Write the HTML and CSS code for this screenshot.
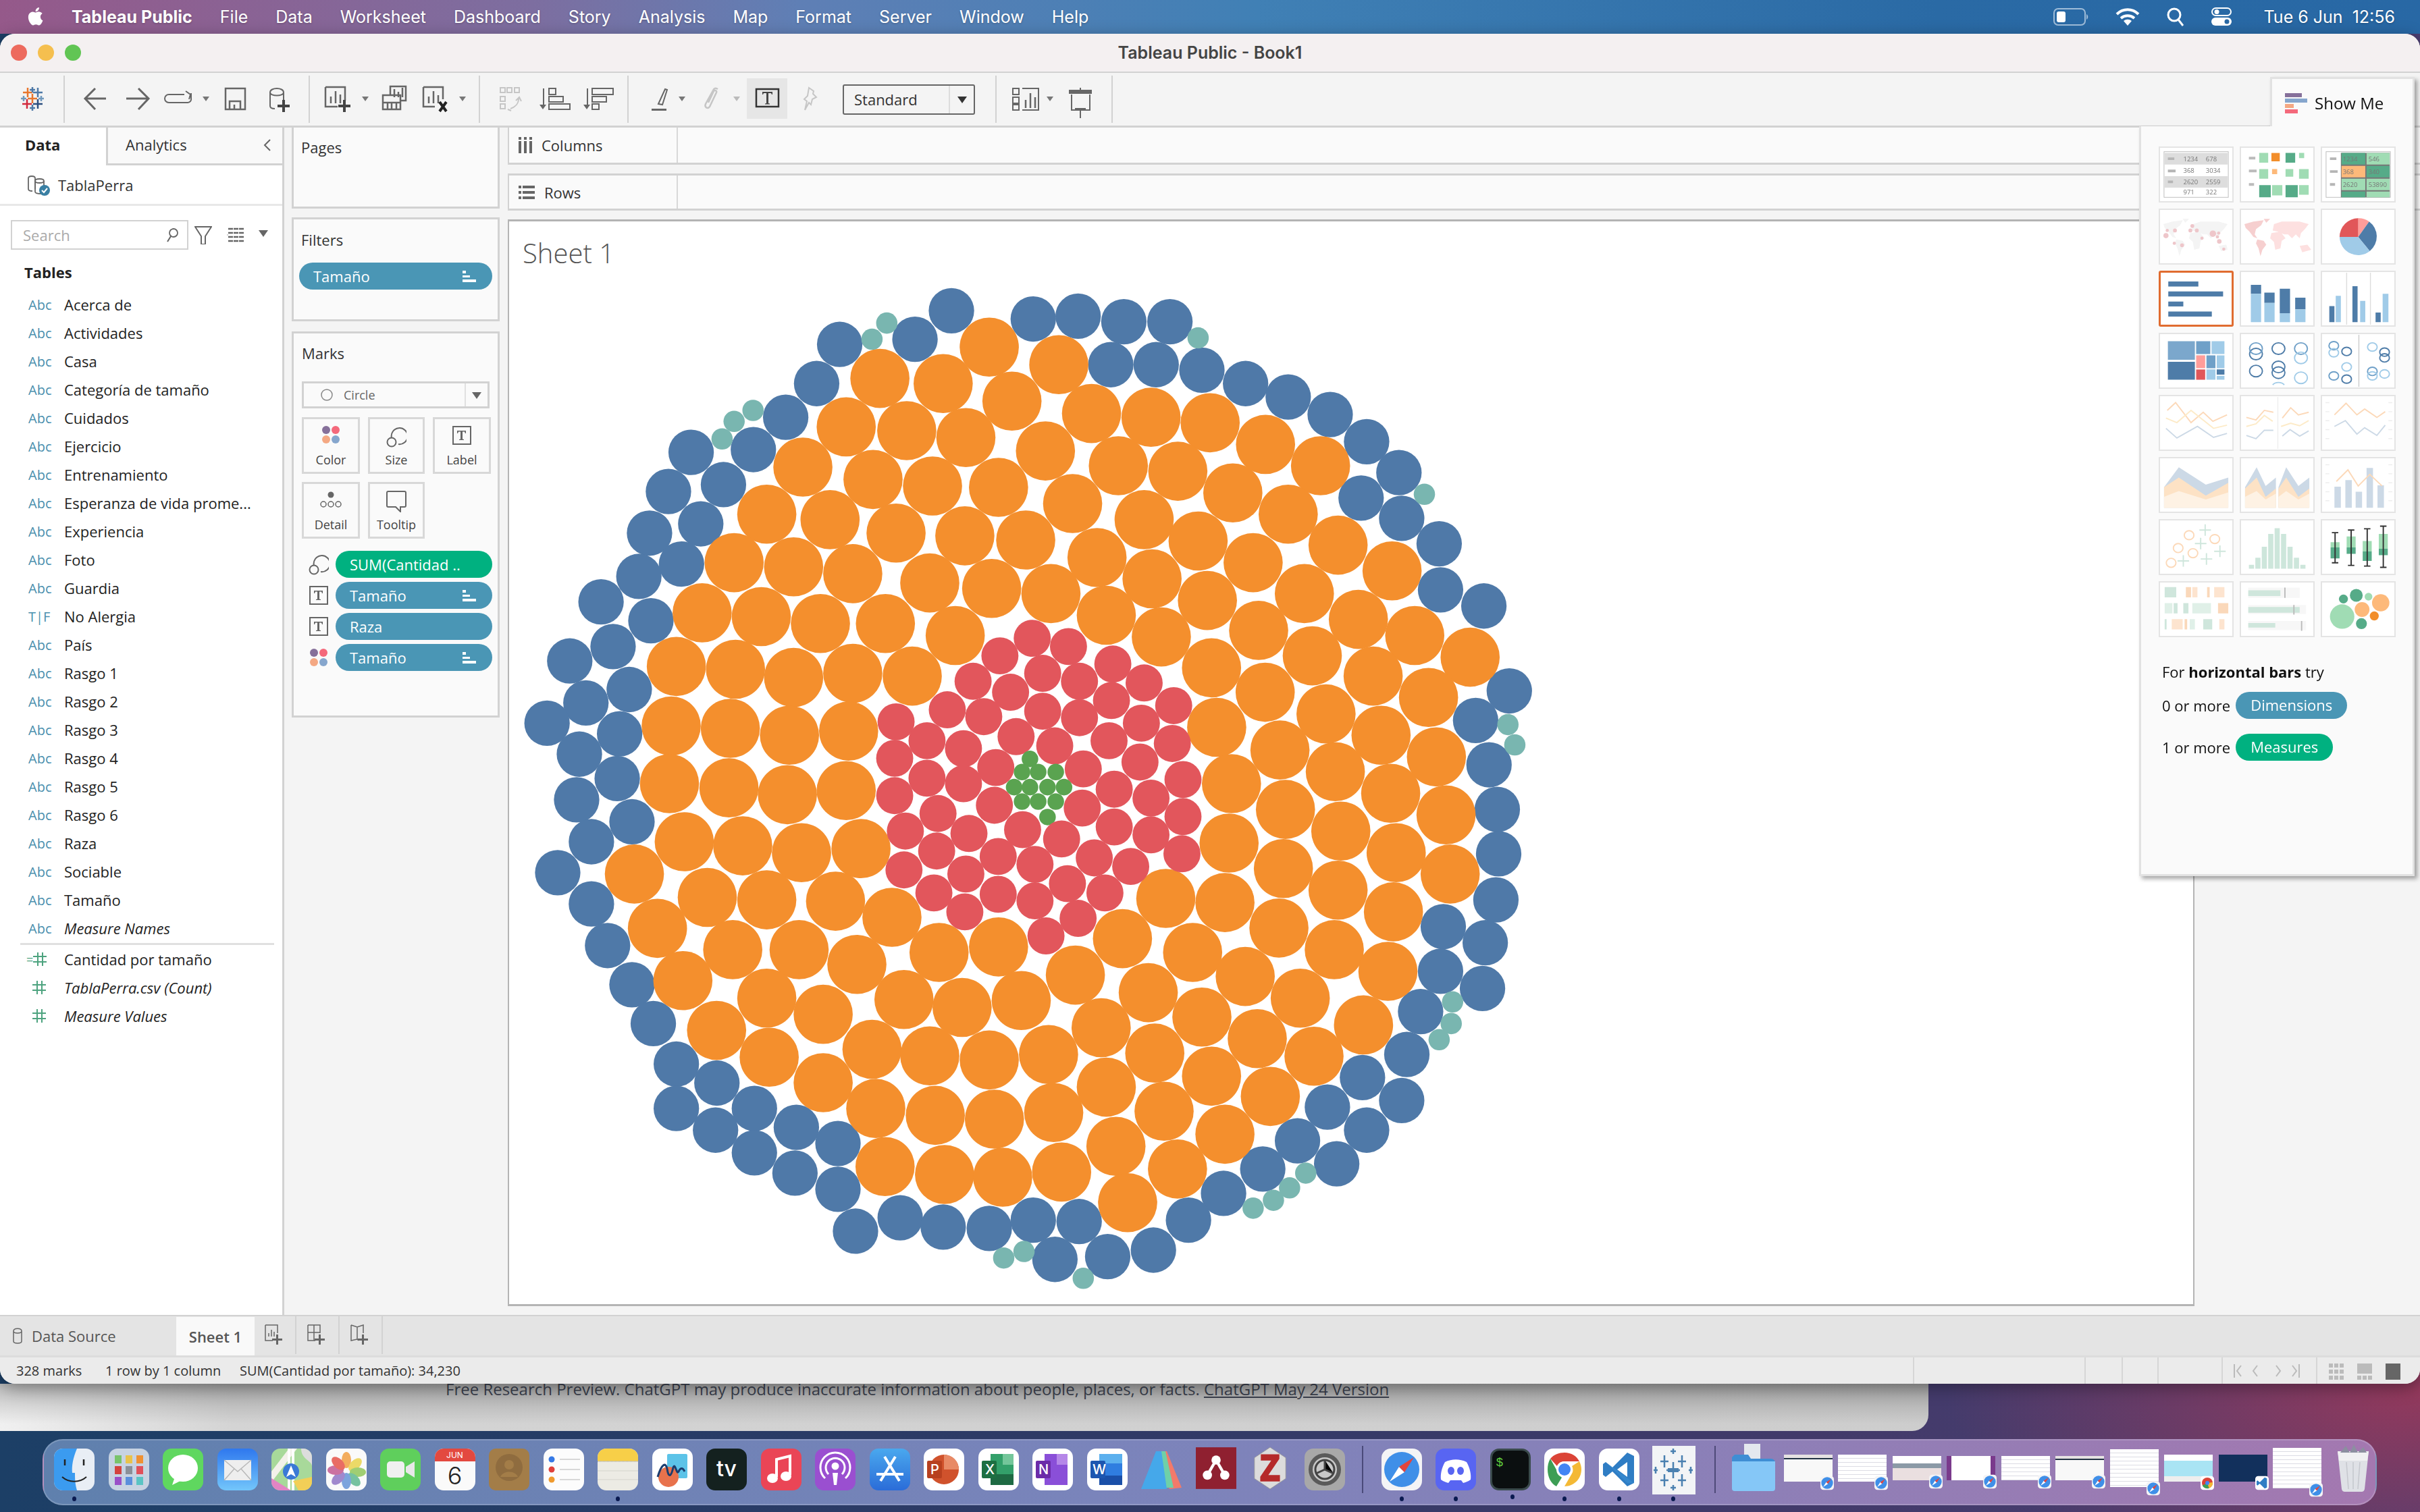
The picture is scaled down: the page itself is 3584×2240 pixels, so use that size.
FILE: index.html
```html
<!doctype html>
<html lang="en">
<head>
    <meta charset="UTF-8">
    <title>Tableau Public - Book1</title>
    <link rel="stylesheet" href="styles.css">
    <script src="chart.js" defer></script>
</head>
<body>
<svg class="defs" width="0" height="0">
    <symbol id="sort" viewBox="0 0 20 17"><path fill="#fff" d="M0 0h5v4H0zM0 7h11v3H0zM0 13h20v4H0z"/></symbol>
    <symbol id="hash" viewBox="0 0 20 20"><path fill="none" stroke="#4da37f" stroke-width="2" d="M7 0v20M14 0v20M0 6h20M0 14h20"/></symbol>
    <symbol id="dots" viewBox="0 0 26 26"><circle cx="6" cy="6" r="6" fill="#86709a"/><circle cx="20" cy="6" r="6" fill="#f4697b"/><circle cx="6" cy="20" r="6" fill="#f4a883"/><circle cx="20" cy="20" r="6" fill="#86a6cd"/></symbol>
    <symbol id="size" viewBox="0 0 30 32"><g fill="none" stroke="#666" stroke-width="2"><path d="M8 18a12 12 0 1 1 10 9"/><circle cx="8" cy="24" r="6.5"/></g></symbol>
    <symbol id="tbox" viewBox="0 0 28 28"><rect x="1" y="1" width="26" height="26" fill="none" stroke="#666" stroke-width="2"/><path fill="#666" d="M8 7h12v4h-1l-1-2.500h-3v11l2 .5v1H10v-1l2-.5v-11H9l-1 2.500H7V7z"/></symbol>
    <symbol id="safari" viewBox="0 0 60 62"><rect width="60" height="62" rx="14" fill="#f4f4f6"/><circle cx="30" cy="31" r="26" fill="#3f8fe8"/><path fill="#fff" d="M12 49 26 27l8 8z"/><path fill="#e5443c" d="M48 13 34 35l-8-8z"/></symbol>
</svg>

<header class="menubar">
    <svg class="apple" viewBox="0 0 24 24"><path fill="#fff" d="M17.050 12.040c-.03-2.870 2.340-4.250 2.450-4.320-1.340-1.950-3.410-2.220-4.150-2.250-1.760-.18-3.440 1.040-4.340 1.040-.89 0-2.270-1.010-3.740-.99-1.920.03-3.700 1.120-4.690 2.840-2 3.470-.51 8.610 1.440 11.420.95 1.380 2.090 2.920 3.580 2.870 1.440-.06 1.980-.93 3.720-.93 1.730 0 2.220.93 3.740.9 1.550-.03 2.530-1.400 3.470-2.790 1.090-1.600 1.540-3.150 1.570-3.230-.03-.02-3.020-1.160-3.050-4.560zM14.180 3.620c.79-.96 1.330-2.290 1.180-3.620-1.140.05-2.530.76-3.350 1.720-.73.85-1.370 2.200-1.200 3.500 1.270.1 2.570-.65 3.370-1.600z"/></svg>
    <nav class="menu">
        <span class="app">Tableau Public</span>
        <span>File</span><span>Data</span><span>Worksheet</span><span>Dashboard</span><span>Story</span><span>Analysis</span><span>Map</span><span>Format</span><span>Server</span><span>Window</span><span>Help</span>
    </nav>
    <div class="status-icons">
        <svg width="52" height="26" viewBox="0 0 52 26"><rect x="1" y="1" width="46" height="24" rx="6" fill="none" stroke="#9fbcd8" stroke-width="2"/><rect x="5" y="5" width="13" height="16" rx="3" fill="#fff"/><path d="M49 9c3 2 3 6 0 8z" fill="#9fbcd8"/></svg>
        <svg width="36" height="26" viewBox="0 0 36 26"><g fill="none" stroke="#fff" stroke-width="4"><path d="M2 9c9-9 23-9 32 0"/><path d="M8 15c6-5 14-5 20 0"/></g><path fill="#fff" d="M12 19c4-3 8-3 12 0l-6 7z"/></svg>
        <svg width="26" height="28" viewBox="0 0 26 28"><circle cx="11" cy="11" r="9" fill="none" stroke="#fff" stroke-width="3"/><path d="m17 18 7 9" stroke="#fff" stroke-width="3"/></svg>
        <svg width="30" height="28" viewBox="0 0 30 28"><rect x="1" y="1" width="28" height="11" rx="5.500" fill="none" stroke="#fff" stroke-width="2"/><circle cx="8" cy="6.500" r="3.500" fill="#fff"/><rect y="15" width="30" height="12" rx="6" fill="#fff"/><circle cx="23" cy="21" r="3.500" fill="#2868a5"/></svg>
        <span class="clock">Tue 6 Jun&nbsp;&nbsp;12:56</span>
    </div>
</header>

<main class="window">
    <div class="titlebar">
        <div class="lights"><i class="red"></i><i class="yellow"></i><i class="green"></i></div>
        <div class="title">Tableau Public - Book1</div>
    </div>

    <div class="toolbar">
        <svg class="tb-left" width="1248" height="78" viewBox="0 108 1248 78">
            <path d="M95 112v70M458 112v70M710 112v70M930 112v70" stroke="#d2d2d2" stroke-width="2"/>
            <g fill="none" stroke-width="2.500">
                <path stroke="#e8762d" d="M41 130v14M34 137h14M48 139v14M41 146h14"/>
                <path stroke="#4e79a7" d="M56 130v14M49 137h14M48 129v8M44 133h8M48 155v9M44 160h8"/>
                <path stroke="#7199bd" d="M35 142v8M31 146h8M61 142v8M57 146h8"/>
                <path stroke="#d1293d" d="M40 147v14M33 154h14"/>
                <path stroke="#2c4f80" d="M56 147v14M49 154h14"/>
            </g>
            <g fill="none" stroke="#666" stroke-width="3">
                <path d="M157 146h-32M141 131l-15 15 15 16"/>
                <path d="M187 146h32M205 131l15 15-15 16"/>
                <path stroke-width="2" d="M273 140h-23a5.500 5.500 0 0 0 0 12h28a5 5 0 0 0 5-6v-8M275 135l7 5-2 7"/>
                <path stroke-width="2.500" d="M334 131h29v31h-29zM340 162v-12h16v12M347 155v7"/>
                <path stroke-width="2" d="M400 137c0-8 20-8 20 0v15M400 137c0 6 20 6 20 0M400 137v20c0 4 4 4 7 4"/>
                <path stroke-width="2.500" d="M482 129h29v20M500 158h-18v-29M490 153v-10M497 153v-18M504 153v-13"/>
                <path stroke-width="2.500" d="M578 140v-12h23v21h-8M567 141h26v21h-26zM567 152h26M574 153v8M580 153v8M587 153v8M584 132v12M590 136v8M596 130v14"/>
                <path stroke-width="2.500" d="M627 129h29v18M644 158h-17v-29M635 153v-10M642 153v-18M649 153v-12"/>
                <path stroke-width="2" d="M805 131v25M813 131h10v9h-10zM813 143h21v8h-21zM813 154h31v8h-31z"/>
                <path stroke-width="2" d="M870 131v25M877 131h31v9h-31zM877 143h21v8h-21zM877 154h10v8h-10z"/>
                <path stroke-width="2" d="M975 154l10-22 3 1-7 22zM967 158"/>
            </g>
            <path fill="#444" d="M418 148h4v7h7v4h-7v7h-4v-7h-7v-4h7zM508 148h4v7h7v4h-7v7h-4v-7h-7v-4h7z"/>
            <path d="m651 151 10 14M661 151l-10 14" stroke="#222" stroke-width="4"/>
            <path fill="#666" d="M799 155h10l-5 7zM864 155h10l-5 7zM965 161h22v3h-22z"/>
            <path fill="#777" d="M300 143h10l-5 7zM536 143h10l-5 7zM680 143h10l-5 7zM1005 143h10l-5 7z"/>
            <path fill="#bbb" d="M1086 143h10l-5 7z"/>
            <g fill="none" stroke="#c6c6c6" stroke-width="2">
                <path d="M741 130h7v7h-7zM751 130h7v7h-7zM762 130h7v7h-7zM741 143h7v7h-7zM741 154h7v7h-7zM768 146c0 8-4 12-12 15M764 149l5-5 3 6M752 162l5 2"/>
                <path stroke-width="2.500" d="M1063 132c-4-3-6 0-7 2l-11 20c-2 5 3 8 6 4l10-21c1-3-3-4-4-2l-8 17"/>
                <path d="M1198 130l7 5-1 4 5 5-6 3-2 8-3-3-6 11 3-13-4-3 5-5z"/>
            </g>
            <rect x="1106" y="116" width="60" height="60" fill="#e6e6e6"/>
            <rect x="1120" y="132" width="33" height="26" fill="none" stroke="#333" stroke-width="2.500"/>
            <path fill="#444" d="M1129 136h15v4h-1l-1-2h-4v15l2 .5v1h-7v-1l2-.5v-15h-4l-1 2h-1z"/>
        </svg>
        <div class="fit-select"><span>Standard</span><b></b></div>
        <svg class="tb-right" width="220" height="78" viewBox="1444 108 220 78">
            <path d="M1475 112v70M1647 112v70" stroke="#d2d2d2" stroke-width="2"/>
            <g fill="none" stroke="#666" stroke-width="2">
                <path d="M1500 131h9v9h-9zM1500 144h9v9h-9zM1500 155h9v8h-9zM1514 131h24v32h-24"/>
                <path stroke-width="2.500" d="M1519 160v-12M1526 160v-22M1533 160v-16"/>
                <path d="M1587 140v23h27v-23M1600 130v6M1600 163v12M1592 161h16"/>
            </g>
            <path fill="#666" d="M1583 133h34v6h-34z"/>
            <path fill="#777" d="M1550 143h10l-5 7z"/>
        </svg>
    </div>

    <div class="workspace">
        <aside class="data-pane">
            <div class="tabs">
                <div class="tab on">Data</div>
                <div class="tab">Analytics<svg class="chev" width="12" height="18" viewBox="0 0 12 18"><path d="M10 1 2 9l8 8" fill="none" stroke="#666" stroke-width="2"/></svg></div>
            </div>
            <div class="source">
                <svg width="34" height="32" viewBox="0 0 34 32"><g fill="none" stroke="#666" stroke-width="1.800"><path d="M2 6c0-4 10-4 10 0v20c0 3 5 3 9 3"/><path d="M2 6v16c0 3 4 3 6 3"/><path d="M12 10c0-4 13-4 13 0s-13 4-13 0v12"/><path d="M25 10v8"/></g><circle cx="26" cy="24" r="8" fill="#397fa3"/><path d="m22 24 3 3 5-6" fill="none" stroke="#fff" stroke-width="2"/></svg>
                <span>TablaPerra</span>
            </div>
            <div class="search-row">
                <div class="search"><span>Search</span><svg width="20" height="22" viewBox="0 0 20 22"><circle cx="12" cy="8" r="6" fill="none" stroke="#666" stroke-width="1.800"/><path d="M8 13 3 21" stroke="#666" stroke-width="2"/></svg></div>
                <svg class="filter" width="26" height="28" viewBox="0 0 26 28"><path d="M1 2h24l-9 14v12h-6V16z" fill="none" stroke="#666" stroke-width="2"/></svg>
                <svg class="list" width="24" height="24" viewBox="0 0 24 24"><path stroke="#666" stroke-width="2.500" stroke-dasharray="7 1" d="M0 3h24M0 9h24M0 15h24M0 21h24"/></svg>
                <b class="caret"></b>
            </div>
            <div class="tables-head">Tables</div>
            <ul class="fields">
                <li><i>Abc</i>Acerca de</li>
                <li><i>Abc</i>Actividades</li>
                <li><i>Abc</i>Casa</li>
                <li><i>Abc</i>Categoría de tamaño</li>
                <li><i>Abc</i>Cuidados</li>
                <li><i>Abc</i>Ejercicio</li>
                <li><i>Abc</i>Entrenamiento</li>
                <li><i>Abc</i>Esperanza de vida prome...</li>
                <li><i>Abc</i>Experiencia</li>
                <li><i>Abc</i>Foto</li>
                <li><i>Abc</i>Guardia</li>
                <li><i>T|F</i>No Alergia</li>
                <li><i>Abc</i>País</li>
                <li><i>Abc</i>Rasgo 1</li>
                <li><i>Abc</i>Rasgo 2</li>
                <li><i>Abc</i>Rasgo 3</li>
                <li><i>Abc</i>Rasgo 4</li>
                <li><i>Abc</i>Rasgo 5</li>
                <li><i>Abc</i>Rasgo 6</li>
                <li><i>Abc</i>Raza</li>
                <li><i>Abc</i>Sociable</li>
                <li><i>Abc</i>Tamaño</li>
                <li class="calc"><i>Abc</i>Measure Names</li>
            </ul>
            <ul class="fields measures">
                <li><i class="eq">=<svg width="20" height="20"><use href="#hash"/></svg></i>Cantidad por tamaño</li>
                <li class="calc"><i class="eq"><svg width="20" height="20"><use href="#hash"/></svg></i>TablaPerra.csv (Count)</li>
                <li class="calc"><i class="eq"><svg width="20" height="20"><use href="#hash"/></svg></i>Measure Values</li>
            </ul>
        </aside>

        <section class="cards">
            <div class="card pages"><h3>Pages</h3></div>
            <div class="card filters">
                <h3>Filters</h3>
                <div class="pill blue wide">Tamaño<svg width="20" height="17"><use href="#sort"/></svg></div>
            </div>
            <div class="card marks">
                <h3>Marks</h3>
                <div class="mark-type"><svg width="18" height="18" viewBox="0 0 18 18"><circle cx="9" cy="9" r="8" fill="none" stroke="#888" stroke-width="1.500"/></svg><span>Circle</span><b></b></div>
                <div class="mark-btns">
                    <div class="mark-btn"><svg width="26" height="26"><use href="#dots"/></svg>Color</div>
                    <div class="mark-btn"><svg width="30" height="32"><use href="#size"/></svg>Size</div>
                    <div class="mark-btn"><svg width="28" height="28"><use href="#tbox"/></svg>Label</div>
                    <div class="mark-btn"><svg width="32" height="28" viewBox="0 0 32 28"><circle cx="16" cy="6" r="4.500" fill="#666"/><g fill="none" stroke="#666" stroke-width="1.500"><circle cx="5" cy="20" r="4"/><circle cx="16" cy="20" r="4"/><circle cx="27" cy="20" r="4"/></g></svg>Detail</div>
                    <div class="mark-btn"><svg width="30" height="32" viewBox="0 0 30 32"><path d="M3 1h24a2 2 0 0 1 2 2v19a2 2 0 0 1-2 2h-6v7l-7-7H3a2 2 0 0 1-2-2V3a2 2 0 0 1 2-2z" fill="none" stroke="#666" stroke-width="2"/></svg>Tooltip</div>
                </div>
                <div class="mark-row"><svg width="30" height="32"><use href="#size"/></svg><div class="pill green">SUM(Cantidad ..</div></div>
                <div class="mark-row"><svg width="28" height="28"><use href="#tbox"/></svg><div class="pill blue">Tamaño<svg width="20" height="17"><use href="#sort"/></svg></div></div>
                <div class="mark-row"><svg width="28" height="28"><use href="#tbox"/></svg><div class="pill blue">Raza</div></div>
                <div class="mark-row"><svg width="26" height="26"><use href="#dots"/></svg><div class="pill blue">Tamaño<svg width="20" height="17"><use href="#sort"/></svg></div></div>
            </div>
        </section>

        <section class="stage">
            <div class="shelf"><div class="shelf-name"><svg width="20" height="24" viewBox="0 0 20 24"><path stroke="#666" stroke-width="4" stroke-dasharray="4 2 18" d="M2 0v24M10 0v24M18 0v24"/></svg>Columns</div></div>
            <div class="shelf"><div class="shelf-name"><svg width="24" height="20" viewBox="0 0 24 20"><path stroke="#666" stroke-width="4" stroke-dasharray="4 2 18" d="M0 2h24M0 10h24M0 18h24"/></svg>Rows</div></div>
            <div class="sheet">
                <h2>Sheet 1</h2>
                <svg id="bubbles" class="bubbles" viewBox="752 322 2498 1613"></svg>
            </div>
        </section>
    </div>

    <div class="sheetbar">
        <div class="ds-tab"><svg width="14" height="24" viewBox="0 0 14 24"><path d="M1 5c0-5 12-5 12 0v15c0 4-12 4-12 0zM1 5c0 4 12 4 12 0" fill="none" stroke="#666" stroke-width="1.500"/></svg>Data Source</div>
        <div class="sheet-tab">Sheet 1</div>
        <div class="add-tab"><svg width="30" height="32" viewBox="0 0 30 32"><path d="M1 1h18v12M12 24H1V1M6 18v-5M10 18V8M14 18v-7" fill="none" stroke="#666" stroke-width="1.500"/><path d="M17 15h3v6h6v3h-6v6h-3v-6h-6v-3h6z" fill="#666"/></svg></div>
        <div class="add-tab"><svg width="30" height="32" viewBox="0 0 30 32"><path d="M1 1h18v12M12 24H1V1M1 12h18M10 1v23" fill="none" stroke="#666" stroke-width="1.500"/><path d="M17 15h3v6h6v3h-6v6h-3v-6h-6v-3h6z" fill="#666"/></svg></div>
        <div class="add-tab"><svg width="30" height="32" viewBox="0 0 30 32"><path d="M1 1l9 3 9-3v12M12 24l-2-2-9 2V1M10 4v18" fill="none" stroke="#666" stroke-width="1.500"/><path d="M17 15h3v6h6v3h-6v6h-3v-6h-6v-3h6z" fill="#666"/></svg></div>
    </div>

    <footer class="statusbar">
        <span class="stat s1">328 marks</span>
        <span class="stat s2">1 row by 1 column</span>
        <span class="stat">SUM(Cantidad por tamaño): 34,230</span>
        <div class="cells"><i class="c1"></i><i class="c2"></i><i class="c3"></i><i class="c4"></i><i class="c5"></i>
            <svg class="nav" width="100" height="24" viewBox="0 0 100 24"><path fill="none" stroke="#bbb" stroke-width="2" d="M2 2v20M12 4 6 12l6 8M36 4l-6 8 6 8M64 4l6 8-6 8M88 4l6 8-6 8M98 2v20"/></svg>
            <i class="c6"></i>
            <svg class="views" width="106" height="24" viewBox="0 0 106 24"><path fill="#bbb" d="M0 0h6v6H0zM8 0h6v6H8zM16 0h6v6h-6zM0 9h6v6H0zM8 9h6v6H8zM16 9h6v6h-6zM0 18h6v6H0zM8 18h6v6H8zM16 18h6v6h-6zM42 0h22v15H42zM42 18h6v6h-6zM50 18h6v6h-6zM58 18h6v6h-6z"/><path fill="#666" d="M84 0h22v24H84z"/></svg>
        </div>
    </footer>

    <aside class="showme">
        <div class="showme-tab">
            <svg width="33" height="30" viewBox="0 0 33 30"><path fill="#86709a" d="M0 0h25v6H0z"/><path fill="#86a6cd" d="M0 8h33v6H0z"/><path fill="#f4a883" d="M0 16h13v6H0z"/><path fill="#f4697b" d="M0 24h19v6H0z"/></svg>
            Show Me
        </div>
        <div class="showme-body">
            <div class="thumbs">
                <svg class="thumb" viewBox="0 0 110 83"><rect x="5" y="6" width="100" height="71" fill="none" stroke="#bbb"/><path fill="#ddd" d="M6 8h98v18H6zM6 44h98v18H6z"/><path fill="#b5b5b5" d="M11 15h10v4H11zM11 34h12v4H11zM11 51h8v4h-8z"/><g class="tnum"><text x="35" y="21">1234</text><text x="70" y="21">678</text><text x="35" y="39">368</text><text x="70" y="39">3034</text><text x="35" y="57">2620</text><text x="70" y="57">2559</text><text x="35" y="73">971</text><text x="70" y="73">322</text></g></svg>
                <svg class="thumb" viewBox="0 0 110 83"><path fill="#bbb" d="M11 14h10v4H11zM11 34h12v4H11zM11 55h8v4h-8z"/><path fill="#a0dcb4" d="M27 8h14v15H27zM89 8h8v8h-8zM27 33h14v15H27zM68 33h12v12H68zM89 33h15v15H89zM47 58h16v16H47zM89 58h15v15H89z"/><path fill="#f28e2b" d="M46 8h13v13H46z"/><path fill="#56ab88" d="M68 8h15v15H68zM27 58h18v19H27zM68 58h19v19H68z"/><path fill="#fdb97a" d="M47 33h8v8h-8z"/></svg>
                <svg class="thumb" viewBox="0 0 110 83"><rect x="5" y="6" width="100" height="71" fill="none" stroke="#bbb"/><path fill="#777" d="M28 8h76v69H28z"/><path fill="#b5b5b5" d="M11 15h10v4H11zM11 35h12v4H11zM11 55h8v4h-8z"/><path fill="#56ab88" d="M29 8h37v18H29zM68 28h36v18H68zM29 68h37v9H29z"/><path fill="#a0dcb4" d="M68 8h36v18H68zM29 48h37v18H29zM68 48h36v18H68zM68 68h36v9H68z"/><path fill="#fdb97a" d="M29 28h37v18H29z"/><g class="tnum"><text x="31" y="21">1234</text><text x="71" y="21">546</text><text x="31" y="41">368</text><text x="71" y="41">340</text><text x="31" y="61">2620</text><text x="71" y="61">53890</text></g></svg>
                <svg class="thumb" viewBox="0 0 110 83"><path fill="#f4f4f4" d="M4 22 18 18 34 16 30 24 22 30 20 38 24 44 18 42 12 34 6 28ZM34 14 44 14 38 20ZM24 46 34 48 38 54 32 62 29 72 26 60 22 52ZM46 36 60 34 68 44 62 48 60 60 52 62 50 50 44 44ZM50 22 62 18 90 18 104 22 98 30 92 36 90 44 84 38 78 44 72 38 66 38 56 34 48 32ZM90 56 102 54 104 62 94 64Z"/><g fill="#eec6ca"><circle cx="49" cy="25" r="3"/><circle cx="10" cy="32" r="2.500"/><circle cx="22" cy="32" r="3"/><circle cx="46" cy="32" r="3"/><circle cx="56" cy="32" r="3"/><circle cx="8" cy="40" r="4"/><circle cx="81" cy="37" r="5"/><circle cx="90" cy="36" r="2.500"/><circle cx="88" cy="42" r="2.500"/><circle cx="91" cy="49" r="3.500"/><circle cx="64" cy="44" r="2.500"/><circle cx="21" cy="52" r="2.500"/><circle cx="33" cy="55" r="3"/><circle cx="98" cy="61" r="2.500"/></g></svg>
                <svg class="thumb" viewBox="0 0 110 83"><path fill="#f6cfcf" d="M4 22 18 18 34 16 30 24 22 30 20 38 24 44 18 42 12 34 6 28ZM34 14 44 14 38 20ZM24 46 34 48 38 54 32 62 29 72 26 60 22 52Z"/><path fill="#fde0e0" d="M46 36 60 34 68 44 62 48 60 60 52 62 50 50 44 44ZM50 22 62 18 90 18 104 22 98 30 92 36 90 44 84 38 78 44 72 38 66 38 56 34 48 32ZM90 56 102 54 108 62 94 66Z"/></svg>
                <svg class="thumb" viewBox="0 0 110 83"><path fill="#ff9d9a" d="M55 42V13a29 29 0 0 1 17 5z"/><path fill="#4e7ca8" d="M55 42 72 18a29 29 0 0 1 1 46z"/><path fill="#a0cbe8" d="M55 42 73 64a29 29 0 0 1-47-22z"/><path fill="#e15759" d="M55 42H26a29 29 0 0 1 29-29z"/></svg>
                <svg class="thumb picked" viewBox="0 0 110 83"><path fill="#4e7ca8" d="M10.500 14h48v8h-48zM10.500 30H98v8H10.500zM10.500 46h24v8h-24zM10.500 62H80v8H10.500z"/></svg>
                <svg class="thumb" viewBox="0 0 110 83"><path fill="#4e7ca8" d="M14 20h16v14H14zM35 32h16v16H35zM59 26h16v38H59zM83 40h16v18H83z"/><path fill="#a0cbe8" d="M14 34h16v44H14zM35 48h16v30H35zM59 64h16v14H59zM83 58h16v20H83z"/></svg>
                <svg class="thumb" viewBox="0 0 110 83"><path d="M37 1v81M74 1v81" stroke="#ddd" stroke-width="1.500"/><path fill="#4e7ca8" d="M10 53h8v25h-8zM46 22h8v56h-8zM82 63h8v15h-8z"/><path fill="#a0cbe8" d="M20 37h8v41h-8zM58 45h8v33h-8zM93 34h9v44h-9z"/></svg>

                <svg class="thumb" viewBox="0 0 110 83"><path fill="#7ba7cc" d="M11 11h42v29H11z"/><path fill="#4e7ca8" d="M11 43h42v28H11zM87 55h12v8H87z"/><path fill="#6fa0c8" d="M55 11h22v20H55zM71 33h14v20H71z"/><path fill="#a0cbe8" d="M79 11h20v20H79zM87 33h12v20H87zM71 55h14v16H71zM87 65h12v6H87z"/><path fill="#ff9d9a" d="M55 33h14v20H55z"/><path fill="#e15759" d="M55 55h14v16H55z"/></svg>
                <svg class="thumb" viewBox="0 0 110 83"><g fill="none" stroke-width="2"><g stroke="#4e7ca8"><ellipse cx="22" cy="31" rx="10" ry="9"/><ellipse cx="22" cy="57.500" rx="10" ry="9"/><ellipse cx="57" cy="22.500" rx="10" ry="9"/><ellipse cx="57" cy="51" rx="10" ry="9"/><ellipse cx="57" cy="60" rx="10" ry="9"/></g><g stroke="#6fa0c8"><ellipse cx="22" cy="22.500" rx="10" ry="9"/><ellipse cx="92" cy="22.500" rx="10" ry="9"/></g><g stroke="#a0cbe8"><ellipse cx="92" cy="37" rx="10" ry="9"/><ellipse cx="92" cy="68" rx="10" ry="9"/><path d="M48 79c4-5 14-5 18 0"/></g></g></svg>
                <svg class="thumb" viewBox="0 0 110 83"><path d="M56 1v81" stroke="#ccc" stroke-width="1.500"/><g fill="none" stroke-width="2"><g stroke="#6fa0c8"><ellipse cx="17" cy="18" rx="7.500" ry="6.500"/><ellipse cx="17" cy="65" rx="7.500" ry="6.500"/><ellipse cx="77" cy="58" rx="7.500" ry="6.500"/></g><g stroke="#a0cbe8"><ellipse cx="17" cy="29" rx="7.500" ry="6.500"/><ellipse cx="37" cy="51" rx="7.500" ry="6.500"/><ellipse cx="77" cy="20" rx="7.500" ry="6.500"/><ellipse cx="77" cy="65" rx="7.500" ry="6.500"/><ellipse cx="96" cy="62" rx="7.500" ry="6.500"/></g><g stroke="#4e7ca8"><ellipse cx="37" cy="27" rx="7.500" ry="6.500"/><ellipse cx="37" cy="70" rx="7.500" ry="6.500"/><ellipse cx="96" cy="28" rx="7.500" ry="6.500"/><ellipse cx="96" cy="37" rx="7.500" ry="6.500"/></g></g></svg>

                <svg class="thumb" viewBox="0 0 110 83"><g fill="none" stroke-width="2"><path stroke="#fcd9b9" d="M10 22 23 10 47 41 66 25 81 39 103 29"/><path stroke="#fdebc8" d="M8 34 25 41 47 22 82 50 103 45"/><path stroke="#ccd9e6" d="M8 50 25 65 57 47 82 64 103 58"/></g></svg>
                <svg class="thumb" viewBox="0 0 110 83"><path d="M56 1v81" stroke="#eee" stroke-width="1.500"/><g fill="none" stroke-width="2"><path stroke="#fcd9b9" d="M7 33 22 37 35 22 49 25M63 34 76 18 88 29 104 25"/><path stroke="#fdebc8" d="M7 47 22 43 35 30 48 39M61 47 76 42 90 46 104 38"/><path stroke="#ccd9e6" d="M7 61 22 66 35 53 49 53M63 62 75 52 90 62 104 54"/></g></svg>
                <svg class="thumb" viewBox="0 0 110 83"><path d="M4 10h6M4 24h6M4 38h6M4 52h6M4 66h6M102 10h6M102 24h6M102 38h6M102 52h6M102 66h6" stroke="#eee" stroke-width="1.500"/><g fill="none" stroke-width="2"><path stroke="#fcd9b9" d="M18 29 36 11 53 29 65 20 84 33 97 24"/><path stroke="#ccd9e6" d="M18 47 35 38 53 59 65 49 84 61 97 45"/></g></svg>

                <svg class="thumb" viewBox="0 0 110 83"><path fill="#ccd9e6" d="M5 45 28 14 70 41 105 30V77H5z"/><path fill="#fde2c5" d="M5 45 28 30 70 58 105 38V77H5z"/><path fill="#fef2e4" d="M5 60 28 51 70 64 105 53V77H5z"/></svg>
                <svg class="thumb" viewBox="0 0 110 83"><path fill="#ccd9e6" d="M5 45 23 14 37 43 53 30V77H5zM57 45 69 14 88 43 105 30V77H57z"/><path fill="#fde2c5" d="M5 47 23 30 37 60 53 47V77H5zM57 47 69 30 88 60 105 47V77H57z"/><path fill="#fef2e4" d="M5 60 23 51 37 64 53 55V77H5zM57 60 69 51 88 64 105 55V77H57z"/></svg>
                <svg class="thumb" viewBox="0 0 110 83"><path d="M4 10h6M4 24h6M4 38h6M4 52h6M4 66h6M102 10h6M102 24h6M102 38h6M102 52h6M102 66h6" stroke="#eee" stroke-width="1.500"/><path fill="#ccd9e6" d="M18 44h10v33H18zM35 34h10v43H35zM51 52h10v25H51zM68 15h10v62H68zM85 42h10v35H85z"/><path d="M21 36 39 18 55 43 73 25 92 43" fill="none" stroke="#fcd9b9" stroke-width="2"/></svg>

                <svg class="thumb" viewBox="0 0 110 83"><g fill="none" stroke="#fcd9b9" stroke-width="2"><ellipse cx="44" cy="23" rx="7.500" ry="7"/><ellipse cx="84" cy="29" rx="7.500" ry="7"/><ellipse cx="27" cy="43" rx="7.500" ry="7"/><ellipse cx="50" cy="51" rx="7.500" ry="7"/><ellipse cx="16" cy="66" rx="7.500" ry="7"/></g><path d="M60 15h18M69 6v18M53 36h18M62 27v18M83 48h18M92 39v18M62 60h18M71 51v18M26 63h18M35 54v18" fill="none" stroke="#cfe6dc" stroke-width="2"/></svg>
                <svg class="thumb" viewBox="0 0 110 83"><path fill="#cde6db" d="M11 69h8v6h-8zM21 58h8v17h-8zM31 41h8v34h-8zM41 21h8v54h-8zM51 12h8v63h-8zM61 21h8v54h-8zM71 41h8v34h-8zM81 58h8v17h-8zM91 69h8v6h-8z"/></svg>
                <svg class="thumb" viewBox="0 0 110 83"><path fill="#a0dcb4" d="M12 34h14v8H12zM37 25h14v17H37zM62 32h14v16H62zM87 21h14v23H87z"/><path fill="#56ab88" d="M12 42h14v17H12zM37 42h14v10H37zM62 48h14v15H62zM87 44h14v10H87z"/><path d="M19 19v47M14 19h10M14 66h10M44 15v55M39 15h10M39 70h10M69 13v58M64 13h10M64 71h10M94 9v64M89 9h10M89 73h10" fill="none" stroke="#333" stroke-width="2"/></svg>

                <svg class="thumb" viewBox="0 0 110 83"><path fill="#cfe6dc" d="M6 7h18v16H6zM20 32h6v16h-6zM35 32h8v16h-8zM6 57h3v16H6zM66 57h14v16H66z"/><path fill="#fad8ba" d="M39 7h8v16h-8zM72 7h4v16h-4zM89 32h16v16H89zM37 57h4v16h-4z"/><path fill="#fde4cf" d="M49 7h8v16h-8zM83 7h16v16H83zM17 57h17v16H17zM91 57h8v16h-8z"/><path fill="#e0f0e8" d="M6 32h12v16H6zM49 32h29v16H49zM45 57h8v16h-8z"/></svg>
                <svg class="thumb" viewBox="0 0 110 83"><path fill="#f7f7f7" d="M10 8h80v16H10zM10 35h90v14H10zM10 60h90v14H10z"/><path fill="#cfe6dc" d="M10 12h50v9H10zM10 38h80v9H10zM10 63h42v7H10z"/><path d="M67 8v16M81 35v15M93 60v15" stroke="#bbb" stroke-width="2"/></svg>
                <svg class="thumb" viewBox="0 0 110 83"><circle cx="30" cy="53" r="19" fill="#a0dcb4"/><circle cx="61" cy="42" r="11.500" fill="#fdb97a"/><circle cx="90" cy="31.500" r="13.500" fill="#fdb97a"/><circle cx="80" cy="52" r="7" fill="#f28e2b"/><circle cx="60" cy="64" r="8.500" fill="#56ab88"/><circle cx="52" cy="20" r="10" fill="#56ab88"/><circle cx="32" cy="25.600" r="7" fill="#56ab88"/><circle cx="71" cy="22" r="6" fill="#a0dcb4"/></svg>
            </div>
            <p class="hint">For <b>horizontal bars</b> try</p>
            <p class="need">0 or more <span class="need-pill blue">Dimensions</span></p>
            <p class="need">1 or more <span class="need-pill green">Measures</span></p>
        </div>
    </aside>
</main>

<div class="behind"><p>Free Research Preview. ChatGPT may produce inaccurate information about people, places, or facts. <u>ChatGPT May 24 Version</u></p></div>

<div class="dock">
    <div class="app-icon run"><svg viewBox="0 0 60 62"><rect width="60" height="62" rx="13" fill="#e9eef5"/><path d="M13 0h21c-6 14-8 26-7 36h4c0 8 0 16 3 26H13A13 13 0 0 1 0 49V13A13 13 0 0 1 13 0z" fill="#3b9bf0"/><path d="M16 16v9M44 16v9" stroke="#222" stroke-width="2.500"/><path d="M12 42c10 9 26 9 36 0" fill="none" stroke="#222" stroke-width="2"/></svg></div>
    <div class="app-icon"><svg viewBox="0 0 60 62"><rect width="60" height="62" rx="13" fill="#c7d3e2"/><path fill="#79c46b" d="M9 10h10v12H9z"/><path fill="#e9c34b" d="M25 10h10v12H25z"/><path fill="#ef9133" d="M41 10h10v12H41z"/><path fill="#d4433f" d="M9 26h10v12H9z"/><path fill="#8a8f98" d="M25 26h10v12H25z"/><path fill="#e0505a" d="M41 26h10v12H41z"/><path fill="#9a50c8" d="M9 42h10v12H9z"/><path fill="#5a8fdc" d="M25 42h10v12H25z"/><path fill="#5ac4c4" d="M41 42h10v12H41z"/></svg></div>
    <div class="app-icon"><svg viewBox="0 0 60 62"><rect width="60" height="62" rx="13" fill="#5fd75f"/><ellipse cx="30" cy="29" rx="22" ry="20" fill="#fff"/><path d="M18 42 14 54l14-7z" fill="#fff"/></svg></div>
    <div class="app-icon"><svg viewBox="0 0 60 62"><defs><linearGradient id="mailg" x2="0" y2="1"><stop offset="0" stop-color="#2f78ee"/><stop offset="1" stop-color="#73c6fb"/></linearGradient></defs><rect width="60" height="62" rx="13" fill="url(#mailg)"/><rect x="10" y="17" width="40" height="30" rx="2" fill="#eee"/><path d="m10 17 20 17 20-17M10 47l15-17M50 47 35 30" fill="none" stroke="#b8b8b8" stroke-width="1.500"/></svg></div>
    <div class="app-icon"><svg viewBox="0 0 60 62"><rect width="60" height="62" rx="13" fill="#a8d99a"/><path d="M0 34 26 0h12L0 50z" fill="#f3f1ea"/><path d="M32 0v62M26 0v62" stroke="#fff" stroke-width="4"/><path d="M44 0c0 16 16 18 16 26V13A13 13 0 0 0 47 0z" fill="#ddd"/><path d="M0 44v5a13 13 0 0 0 13 13h16z" fill="#e384c4"/><path d="M40 62l-8-14 28-6v7a13 13 0 0 1-13 13z" fill="#f2cf57"/><circle cx="29" cy="34" r="12" fill="#3a79d6"/><path d="m29 25 7 17-7-4-7 4z" fill="#fff"/></svg></div>
    <div class="app-icon"><svg viewBox="0 0 60 62"><rect width="60" height="62" rx="13" fill="#fafafa"/><g opacity=".8"><ellipse cx="30" cy="17" rx="7" ry="12" fill="#f29a38"/><ellipse cx="43" cy="24" rx="7" ry="12" fill="#e9d143" transform="rotate(45 43 24)"/><ellipse cx="47" cy="35" rx="7" ry="12" fill="#8ac452" transform="rotate(90 47 35)"/><ellipse cx="41" cy="46" rx="7" ry="12" fill="#56b58a" transform="rotate(-45 41 46)"/><ellipse cx="30" cy="48" rx="7" ry="12" fill="#5f8fd6"/><ellipse cx="18" cy="44" rx="7" ry="12" fill="#8a6dc4" transform="rotate(45 18 44)"/><ellipse cx="14" cy="32" rx="7" ry="12" fill="#c0508c" transform="rotate(90 14 32)"/><ellipse cx="18" cy="22" rx="7" ry="12" fill="#e5493f" transform="rotate(-45 18 22)"/></g></svg></div>
    <div class="app-icon"><svg viewBox="0 0 60 62"><rect width="60" height="62" rx="13" fill="#5fcf5c"/><rect x="10" y="19" width="26" height="24" rx="5" fill="#f0f0f0"/><path d="M38 27l13-8v24l-13-8z" fill="#e8e8e8"/></svg></div>
    <div class="app-icon cal"><b>JUN</b><span>6</span></div>
    <div class="app-icon"><svg viewBox="0 0 60 62"><rect width="60" height="62" rx="10" fill="#a37d48"/><circle cx="30" cy="28" r="20" fill="#8f6c3f"/><circle cx="30" cy="24" r="7" fill="#a37d48"/><path d="M17 42c4-10 22-10 26 0z" fill="#a37d48"/></svg></div>
    <div class="app-icon"><svg viewBox="0 0 60 62"><rect width="60" height="62" rx="13" fill="#fcfcfc"/><circle cx="12" cy="16" r="4.500" fill="#3579e6"/><circle cx="12" cy="31" r="4.500" fill="#e0403a"/><circle cx="12" cy="46" r="4.500" fill="#ef9a2d"/><path d="M24 16h30M24 31h30M24 46h30" stroke="#ccc" stroke-width="1.500"/></svg></div>
    <div class="app-icon run"><svg viewBox="0 0 60 62"><rect width="60" height="62" rx="13" fill="#ecebe4"/><path d="M13 0h34a13 13 0 0 1 13 13v6H0v-6A13 13 0 0 1 13 0z" fill="#f7cf48"/><path d="M0 19h60" stroke="#bbb" stroke-dasharray="1 1" stroke-width="2"/><path d="M0 33h60M0 46h60" stroke="#d5d4cc"/></svg></div>
    <div class="app-icon"><svg viewBox="0 0 60 62"><rect width="60" height="62" rx="13" fill="#fff"/><rect x="22" y="8" width="30" height="36" rx="2" fill="#5cc3e8"/><circle cx="24" cy="42" r="15" fill="#e8724c"/><path d="M8 42c6-20 12-22 14-12 2 14 6 12 9-2 3-8 5 12 8 6 3-6 6-6 9 0" fill="none" stroke="#1b3d6e" stroke-width="3"/></svg></div>
    <div class="app-icon tv"><span>tv</span></div>
    <div class="app-icon"><svg viewBox="0 0 60 62"><rect width="60" height="62" rx="13" fill="#ea4556"/><path d="M23 42V16l20-5v28" fill="none" stroke="#fff" stroke-width="4"/><ellipse cx="17" cy="44" rx="8" ry="7" fill="#fff"/><ellipse cx="37" cy="41" rx="8" ry="7" fill="#fff"/></svg></div>
    <div class="app-icon"><svg viewBox="0 0 60 62"><rect width="60" height="62" rx="13" fill="#9a4fd0"/><g fill="none" stroke="#fff" stroke-width="3"><path d="M15 44a22 22 0 1 1 30 0"/><path d="M20 38a14 14 0 1 1 20 0"/></g><circle cx="30" cy="26" r="5.500" fill="#fff"/><path d="M26 36h8l-2 18h-4z" fill="#fff"/></svg></div>
    <div class="app-icon"><svg viewBox="0 0 60 62"><defs><linearGradient id="asg" x2="0" y2="1"><stop offset="0" stop-color="#4aa8ee"/><stop offset="1" stop-color="#2b6cd8"/></linearGradient></defs><rect width="60" height="62" rx="13" fill="url(#asg)"/><path d="M22 12l22 36M38 12 16 48M10 38h40" fill="none" stroke="#fff" stroke-width="4"/></svg></div>
    <div class="app-icon"><svg viewBox="0 0 60 62"><rect width="60" height="62" rx="13" fill="#fff"/><circle cx="30" cy="31" r="22" fill="#d0522c"/><path d="M30 9a22 22 0 0 1 22 22H30z" fill="#e88a66"/><rect x="5" y="18" width="22" height="26" rx="2" fill="#b7401f"/><text class="office" x="10" y="38">P</text></svg></div>
    <div class="app-icon"><svg viewBox="0 0 60 62"><rect width="60" height="62" rx="13" fill="#fff"/><path fill="#33a06a" d="M18 8h34v46H18z"/><path fill="#74c69a" d="M36 8h16v16H36z"/><path fill="#1e6a43" d="M18 38h34v16H18z"/><rect x="5" y="18" width="22" height="26" rx="2" fill="#1d6f42"/><text class="office" x="10" y="38">X</text></svg></div>
    <div class="app-icon"><svg viewBox="0 0 60 62"><rect width="60" height="62" rx="13" fill="#fff"/><path fill="#8a4fd8" d="M18 8h34v46H18z"/><path fill="#b587e8" d="M36 8h16v16H36z"/><rect x="5" y="18" width="22" height="26" rx="2" fill="#6b2ba8"/><text class="office" x="9" y="38">N</text></svg></div>
    <div class="app-icon"><svg viewBox="0 0 60 62"><rect width="60" height="62" rx="13" fill="#fff"/><path fill="#2f7de0" d="M18 8h34v46H18z"/><path fill="#5cb0ee" d="M18 8h34v14H18z"/><path fill="#1a4fa8" d="M18 40h34v14H18z"/><rect x="5" y="18" width="22" height="26" rx="2" fill="#1d56b0"/><text class="office" x="8" y="38">W</text></svg></div>
    <div class="app-icon"><svg viewBox="0 0 60 62"><path d="M22 4h16l22 54-18 2z" fill="#f27a6a"/><path d="M22 4h14l12 54H30z" fill="#6fd0a8"/><path d="M22 4h8l8 56H0z" fill="#45a8ea"/></svg></div>
    <div class="app-icon big"><svg viewBox="0 0 70 72"><rect width="70" height="72" fill="#8f2030"/><g fill="#fff"><circle cx="35" cy="22" r="8"/><circle cx="20" cy="48" r="8"/><circle cx="50" cy="48" r="8"/></g><path d="M35 22 20 48M35 22l15 26" stroke="#fff" stroke-width="5"/></svg></div>
    <div class="app-icon big"><svg viewBox="0 0 70 72"><path d="M35 0 62 18v36L35 72 8 54V18z" fill="#dcdcdc" stroke="#999"/><path d="M19 12h32v8L32 48h20v11H18v-8L37 23H19z" fill="#b52a2a"/></svg></div>
    <div class="app-icon"><svg viewBox="0 0 60 62"><rect width="60" height="62" rx="13" fill="#a8a8a8"/><circle cx="30" cy="31" r="24" fill="#5a5a5a"/><circle cx="30" cy="31" r="18" fill="#c8c8c8"/><circle cx="30" cy="31" r="14" fill="none" stroke="#444" stroke-width="3"/><path d="M30 17v14l13 6M30 31l-13 6" stroke="#444" stroke-width="3"/></svg></div>
    <i class="dock-sep"></i>
    <div class="app-icon run"><svg viewBox="0 0 60 62"><use href="#safari"/></svg></div>
    <div class="app-icon run"><svg viewBox="0 0 60 62"><rect width="60" height="62" rx="13" fill="#5865f2"/><path d="M14 20c10-5 22-5 32 0 5 9 7 18 6 26-4 3-8 4-11 5l-3-4H22l-3 4c-3-1-7-2-11-5-1-8 1-17 6-26z" fill="#fff"/><ellipse cx="23" cy="33" rx="5" ry="6" fill="#5865f2"/><ellipse cx="37" cy="33" rx="5" ry="6" fill="#5865f2"/></svg></div>
    <div class="app-icon run term"><span>$</span></div>
    <div class="app-icon run"><svg viewBox="0 0 60 62"><rect width="60" height="62" rx="13" fill="#fff"/><path d="M30 6c10 0 18 5 22 13H30a12 12 0 0 0-11 7L9 15c5-6 13-9 21-9z" fill="#db4437"/><path d="M9 15l11 20 6 8-8 13C10 52 5 42 5 31c0-6 1-11 4-16z" fill="#3d9e55"/><path d="M52 19c2 4 3 8 3 12 0 14-11 25-25 25l11-19c2-3 2-7 0-11z" fill="#f4b935"/><circle cx="30" cy="31" r="12" fill="#fff"/><circle cx="30" cy="31" r="9" fill="#4285f4"/></svg></div>
    <div class="app-icon run"><svg viewBox="0 0 60 62"><rect width="60" height="62" rx="13" fill="#fff"/><path d="M42 6 52 11v40L42 56 20 34 10 42 6 39V23l4-3 10 8z" fill="#2f7dc4"/><path d="M42 20 27 31l15 11z" fill="#fff"/><path d="m10 20 32 31 10 0z" fill="#3e95dc" opacity=".4"/></svg></div>
    <div class="app-icon run"><svg viewBox="0 0 60 62"><rect x="-1" y="-4" width="64" height="72" fill="#f2f4f6"/><path d="M30 30v20M22 34h16M14 22h0" stroke="#4a80b0" stroke-width="0"/><path d="M30 20v24M20 32h20M17 10v18M11 19h12M43 10v18M37 19h12M17 38v18M11 47h12M43 38v18M37 47h12M30 0v8M26 4h8M30 54v8M26 58h8M4 27v10M1 32h6M56 27v10M53 32h6" stroke="#4a80b0" stroke-width="2.500"/><path d="M22 29h16v6H22z" fill="#4a80b0"/></svg></div>
    <i class="dock-sep sep2"></i>
    <div class="folder"><svg viewBox="0 0 64 70"><path d="M18 0h24v24H18z" fill="#e4e8ee"/><path d="M4 16h20l4 6h30a6 6 0 0 1 6 6v4H0V20z" fill="#3f8ed4"/><path d="M0 26h64v40a4 4 0 0 1-4 4H4a4 4 0 0 1-4-4z" fill="#85c7f7"/></svg></div>
    <div class="minis">
        <div class="mini h40 a"><svg width="20" height="24"><use href="#safari"/></svg></div>
        <div class="mini h40 b"><svg width="20" height="24"><use href="#safari"/></svg></div>
        <div class="mini h36 c"><svg width="20" height="24"><use href="#safari"/></svg></div>
        <div class="mini h36 d"><svg width="20" height="24"><use href="#safari"/></svg></div>
        <div class="mini h36 b"><svg width="20" height="24"><use href="#safari"/></svg></div>
        <div class="mini h36 a"><svg width="20" height="24"><use href="#safari"/></svg></div>
        <div class="mini h56 b"><svg width="20" height="24"><use href="#safari"/></svg></div>
        <div class="mini h40 e"><svg width="20" height="24" viewBox="0 0 60 62"><rect width="60" height="62" rx="13" fill="#fff"/><circle cx="30" cy="31" r="24" fill="#db4437"/><path d="M30 31 8 42a24 24 0 0 0 30 12z" fill="#3d9e55"/><path d="M30 31 54 28a24 24 0 0 1-16 26z" fill="#f4b935"/><circle cx="30" cy="31" r="9" fill="#4285f4"/></svg></div>
        <div class="mini h40 f"><svg width="20" height="24" viewBox="0 0 60 62"><rect width="60" height="62" rx="13" fill="#fff"/><path d="M42 6 52 11v40L42 56 20 34 10 42 6 39V23l4-3 10 8z" fill="#2f7dc4"/></svg></div>
        <div class="mini h60 b"><svg width="20" height="24"><use href="#safari"/></svg></div>
    </div>
    <div class="trash"><svg viewBox="0 0 54 70"><path d="M4 10h46l-6 56a5 5 0 0 1-5 4H15a5 5 0 0 1-5-4z" fill="#dfe1e6"/><path d="M4 10h46l-2 14H6z" fill="#f0f0f2"/><path d="M8 12 16 2l6 10 6-12 6 12 8-8 5 8z" fill="#8c8fa0"/><path d="M17 26l3 40M27 26v40M37 26l-3 40" stroke="#c5c7cd" stroke-width="1.500"/></svg></div>
</div>
</body>
</html>
```

FILE: styles.css
```css
*{
    box-sizing: border-box;
}
html, body{
    margin: 0;
    padding: 0;
    height: 2240px;
    overflow: hidden;
}
body{
    width: 3584px;
    font-family: "Open Sans", "Liberation Sans", sans-serif;
    color: #222;
    background:
        radial-gradient(700px 300px at 3584px 2060px, #93395c, transparent),
        linear-gradient(90deg, #1c3f66, #2f3a66 45%, #423a6a 75%, #4c3f72);
}
.defs{
    position: absolute;
}

/* mac menu bar */
.menubar{
    height: 50px;
    display: flex;
    align-items: center;
    padding-left: 40px;
    color: #fff;
    font-family: Inter, sans-serif;
    font-size: 25px;
    background: linear-gradient(90deg, #95598a, #7d6ea0 22%, #5f7fb5 33%, #4080b5 52%, #2a6aa5 80%, #2868a5);
    text-shadow: 0 1px 3px rgba(0,0,0,.25);
}
.apple{
    width: 28px;
    height: 32px;
}
.menu{
    display: flex;
    gap: 41px;
    margin-left: 38px;
}
.menu .app{
    font-weight: 700;
}
.status-icons{
    margin-left: auto;
    margin-right: 37px;
    display: flex;
    align-items: center;
    gap: 40px;
}
.clock{
    margin-left: 8px;
}

/* tableau window */
.window{
    position: relative;
    height: 2000px;
    display: flex;
    flex-direction: column;
    background: #f4f4f4;
    border-radius: 22px 22px 22px 22px;
    overflow: hidden;
    box-shadow: 0 6px 24px rgba(0,0,0,.35);
    z-index: 2;
}
.titlebar{
    height: 58px;
    flex: none;
    display: flex;
    align-items: center;
    justify-content: center;
    background: #f4f0f1;
    border-bottom: 2px solid #d2d2d2;
    position: relative;
}
.lights{
    position: absolute;
    left: 16px;
    top: 16px;
    display: flex;
    gap: 16px;
}
.lights i{
    width: 24px;
    height: 24px;
    border-radius: 50%;
}
.lights .red{ background: #ed6a5e; }
.lights .yellow{ background: #f5bf4f; }
.lights .green{ background: #61c554; }
.title{
    font-family: Inter, sans-serif;
    font-weight: 600;
    font-size: 25px;
    color: #444;
}

.toolbar{
    height: 78px;
    flex: none;
    display: flex;
    align-items: center;
    background: #f4f4f4;
}
.tb-left, .tb-right{
    flex: none;
}
.fit-select{
    width: 196px;
    height: 45px;
    flex: none;
    display: flex;
    align-items: center;
    padding-left: 15px;
    border: 2px solid #666;
    border-radius: 3px;
    font-size: 22px;
    color: #333;
    position: relative;
}
.fit-select b{
    position: absolute;
    right: 0;
    top: 0;
    width: 37px;
    height: 41px;
    border-left: 2px solid #ddd;
}
.fit-select b::after, .caret::after, .mark-type b::after{
    content: "";
    position: absolute;
    left: 11px;
    top: 16px;
    border: 7px solid transparent;
    border-top: 10px solid #333;
    border-bottom: 0;
}

.workspace{
    height: 1762px;
    flex: none;
    display: flex;
    border-top: 3px solid #d2d2d2;
}

/* data pane */
.data-pane{
    width: 421px;
    flex: none;
    background: #fff;
    border-right: 3px solid #d2d2d2;
}
.tabs{
    display: flex;
    height: 56px;
}
.tab{
    padding-left: 37px;
    font-size: 22px;
    line-height: 50px;
    font-weight: 700;
    width: 157px;
}
.tab + .tab{
    flex: 1;
    padding-left: 26px;
    font-weight: 400;
    background: #f9f9f9;
    border-left: 3px solid #d2d2d2;
    border-bottom: 3px solid #d2d2d2;
    position: relative;
    color: #333;
}
.chev{
    position: absolute;
    right: 16px;
    top: 17px;
}
.source{
    height: 60px;
    display: flex;
    align-items: center;
    gap: 12px;
    padding-left: 40px;
    font-size: 22px;
    color: #333;
    border-bottom: 3px solid #e8e8e8;
}
.search-row{
    display: flex;
    align-items: center;
    margin-top: 21px;
    height: 44px;
    padding-left: 16px;
    position: relative;
}
.search{
    width: 263px;
    height: 44px;
    border: 2px solid #d2d2d2;
    display: flex;
    align-items: center;
    justify-content: space-between;
    padding: 0 12px 0 16px;
    font-size: 22px;
    color: #aaa;
}
.filter{
    margin-left: 9px;
}
.list{
    margin-left: 24px;
}
.search-row .filter + .list{
    box-shadow: -13px 0 0 -11px #d2d2d2;
}
.caret{
    position: relative;
    width: 28px;
    height: 30px;
    margin-left: 10px;
}
.caret::after{
    top: 8px;
    border-top-color: #666;
}
.tables-head{
    height: 42px;
    margin-top: 12px;
    padding-left: 36px;
    font-weight: 700;
    font-size: 22px;
    line-height: 42px;
}
.fields{
    list-style: none;
    margin: 6px 0 0;
    padding: 0;
}
.fields li{
    height: 42px;
    display: flex;
    align-items: center;
    font-size: 22px;
    color: #222;
    white-space: nowrap;
}
.fields i{
    width: 95px;
    padding-left: 42px;
    flex: none;
    font-style: normal;
    font-size: 20px;
    color: #4a8fae;
}
.fields i.eq{
    color: #4da37f;
    padding-left: 48px;
    display: flex;
    align-items: center;
    position: relative;
}
.fields li:first-child i.eq{
    padding-left: 39px;
    font-size: 18px;
}
.fields .calc{
    font-style: italic;
}
.measures{
    margin: 1px 0 0 0;
    position: relative;
}
.measures::before{
    content: "";
    display: block;
    height: 3px;
    margin: 0 12px 0 30px;
    background: #e0e0e0;
}

/* pages, filters, marks */
.cards{
    width: 331px;
    flex: none;
    display: flex;
    flex-direction: column;
    padding: 0 12px 0 11px;
}
.card{
    background: #fafafa;
    border: 3px solid #d2d2d2;
    border-top-width: 3px;
    padding: 0 11px;
    color: #333;
}
.card h3{
    margin: 0;
    font-weight: 400;
    font-size: 22px;
}
.pages{
    height: 120px;
    padding-top: 14px;
    border-top: 0;
}
.filters{
    height: 154px;
    margin-top: 13px;
    padding: 15px 8px 0;
}
.filters h3{
    padding-left: 3px;
    margin-bottom: 19px;
}
.marks{
    height: 572px;
    margin-top: 15px;
    padding: 14px 12px 0;
}
.pill{
    height: 40px;
    border-radius: 20px;
    padding: 0 14px 0 21px;
    color: #fff;
    font-size: 22px;
    display: flex;
    align-items: center;
    justify-content: space-between;
}
.pill.blue{ background: #4a96b5; }
.pill.green{ background: #00b180; }
.pill svg{
    flex: none;
    margin-right: 10px;
}
.mark-type{
    height: 40px;
    margin-top: 27px;
    border: 3px solid #d2d2d2;
    display: flex;
    align-items: center;
    gap: 16px;
    padding-left: 25px;
    font-size: 18px;
    color: #666;
    position: relative;
}
.mark-type b{
    position: absolute;
    right: 0;
    top: 0;
    width: 34px;
    height: 34px;
    border-left: 2px solid #e0e0e0;
}
.mark-type b::after{
    left: 9px;
    top: 13px;
    border-top-color: #666;
}
.mark-btns{
    display: grid;
    grid-template-columns: 86px 84px 86px;
    grid-auto-rows: 84px;
    column-gap: 12px;
    row-gap: 12px;
    margin-top: 13px;
}
.mark-btn{
    border: 3px solid #d8d8d8;
    display: flex;
    flex-direction: column;
    align-items: center;
    justify-content: space-between;
    padding: 10px 0 6px;
    font-size: 18px;
    color: #444;
}
.mark-row{
    display: grid;
    grid-template-columns: 50px 1fr;
    align-items: center;
    justify-items: center;
    height: 46px;
    margin-right: -4px;
}
.mark-row .pill{
    width: 100%;
}
.mark-btns + .mark-row{
    margin-top: 15px;
}

/* shelves and sheet */
.stage{
    flex: 1;
    min-width: 0;
    display: flex;
    flex-direction: column;
}
.shelf{
    height: 55px;
    flex: none;
    background: #fafafa;
    border-top: 0;
    border-bottom: 3px solid #d2d2d2;
    border-left: 2px solid #d2d2d2;
    margin-bottom: 13px;
}
.shelf + .shelf{
    border-top: 3px solid #d2d2d2;
}
.shelf-name{
    width: 250px;
    height: 100%;
    display: flex;
    align-items: center;
    gap: 14px;
    padding-left: 14px;
    font-size: 22px;
    color: #333;
    border-right: 2px solid #d8d8d8;
}
.shelf + .shelf .shelf-name{
    padding-left: 14px;
}
.sheet{
    position: relative;
    flex: 1;
    margin: 0 334px 13px 0;
    background: #fff;
    box-shadow: inset 0 3px 0 #b4b4b4, inset 2px 0 0 #b4b4b4, inset 0 -3px 0 #b4b4b4, inset -2px 0 0 #b4b4b4;
}
.sheet h2{
    margin: 0;
    padding: 22px 0 0 22px;
    font-weight: 300;
    font-size: 40px;
    color: #555;
}
.bubbles{
    position: absolute;
    inset: 0;
    width: 100%;
    height: 100%;
}

/* bottom bars */
.sheetbar{
    height: 60px;
    flex: none;
    display: flex;
    background: #e4e4e4;
    border-top: 2px solid #d2d2d2;
    color: #555;
    font-size: 22px;
}
.ds-tab{
    width: 261px;
    display: flex;
    align-items: center;
    gap: 14px;
    padding-left: 19px;
}
.sheet-tab{
    width: 116px;
    background: #f9f9f9;
    display: flex;
    align-items: center;
    justify-content: center;
    font-weight: 600;
    margin-top: 1px;
}
.add-tab{
    width: 64px;
    display: flex;
    align-items: center;
    justify-content: center;
    border-right: 2px solid #d2d2d2;
    margin: 0 0 2px;
}
.add-tab:nth-child(3){
    width: 62px;
}
.statusbar{
    flex: 1;
    display: flex;
    align-items: center;
    background: #ebebeb;
    border-top: 3px solid #dcdcdc;
    font-size: 20px;
    color: #333;
    padding-left: 24px;
    position: relative;
}
.stat{
    white-space: nowrap;
}
.s1{ width: 132px; }
.s2{ width: 199px; }
.cells{
    position: absolute;
    inset: 0;
    pointer-events: none;
}
.cells i{
    position: absolute;
    top: 0;
    bottom: 0;
    border-left: 2px solid #d6d6d6;
}
.c1{ left: 2833px; }
.c2{ left: 3087px; }
.c3{ left: 3142px; }
.c4{ left: 3195px; }
.c5{ left: 3290px; }
.c6{ left: 3430px; }
.nav{
    position: absolute;
    left: 3307px;
    top: 8px;
}
.views{
    position: absolute;
    left: 3449px;
    top: 9px;
}

/* show me panel sits over the shelves */
.showme{
    position: absolute;
    left: 3168px;
    top: 64px;
    width: 408px;
    height: 1184px;
    filter: drop-shadow(4px 4px 3px rgba(0,0,0,.35));
}
.showme-tab{
    position: absolute;
    right: 0;
    top: 0;
    width: 214px;
    height: 74px;
    background: #fafafa;
    border: 3px solid #e2e2e2;
    border-bottom: 0;
    display: flex;
    align-items: center;
    gap: 11px;
    padding: 0 0 0 19px;
    font-size: 24px;
    color: #111;
}
.showme-tab svg{
    flex: none;
}
.showme-body{
    position: absolute;
    top: 73px;
    left: 0;
    right: 0;
    bottom: 0;
    background: #fafafa;
    border: 3px solid #e2e2e2;
    border-top: 0;
    padding: 30px 0 0 26px;
}
.thumbs{
    display: grid;
    grid-template-columns: repeat(3, 111px);
    grid-auto-rows: 83px;
    column-gap: 9px;
    row-gap: 9px;
}
.thumb{
    width: 111px;
    height: 83px;
    background: #fff;
    border: 2px solid #e4e4e4;
}
.thumb.picked{
    border: 3px solid #e06c30;
    border-radius: 3px;
}
.tnum text{
    font-size: 10px;
    fill: #777;
}
.hint, .need{
    margin: 0;
    padding-left: 5px;
    font-size: 22px;
    color: #111;
    white-space: nowrap;
}
.hint{
    margin-top: 36px;
}
.need{
    margin-top: 22px;
    display: flex;
    align-items: center;
    gap: 6px;
    height: 40px;
}
.hint + .need{
    margin-top: 15px;
}
.need-pill{
    height: 40px;
    padding: 0 22px;
    border-radius: 20px;
    line-height: 38px;
    color: #fff;
    margin-left: 2px;
}
.need-pill.blue{ background: #4a96b5; }
.need-pill.green{ background: #00b180; }

/* window behind, then the dock */
.behind{
    width: 2856px;
    height: 70px;
    border-radius: 0 0 24px 0;
    background:
        linear-gradient(180deg, rgba(0,0,0,.22), transparent 85%),
        linear-gradient(90deg, #f0f0f0, #d4d4d4 12%, #cdcdcd);
    overflow: hidden;
}
.behind p{
    margin: -4px 0 0 660px;
    font-size: 24px;
    line-height: 24px;
    color: #3a3f4c;
    white-space: nowrap;
}
.dock{
    position: absolute;
    left: 63px;
    top: 2132px;
    width: 3457px;
    height: 98px;
    display: flex;
    align-items: center;
    gap: 20.500px;
    padding: 0 0 12px 15px;
    border-radius: 30px;
    border: 2px solid rgba(255,255,255,.18);
    background: linear-gradient(90deg, #5f80ad, #7a84bb 45%, #8a80b8 70%, #a478b0);
}
.app-icon{
    position: relative;
    width: 60px;
    height: 62px;
    flex: none;
    margin-top: 4px;
}
.app-icon svg{
    display: block;
    width: 100%;
    height: 100%;
    overflow: visible;
}
.app-icon.big{
    height: 72px;
    margin-top: 0;
}
.app-icon.run::after{
    content: "";
    position: absolute;
    left: 27px;
    bottom: -16px;
    width: 6px;
    height: 7px;
    border-radius: 50%;
    background: #0a1a50;
}
.cal{
    background: #fafafa;
    border-radius: 13px;
    overflow: hidden;
    text-align: center;
}
.cal b{
    display: block;
    height: 19px;
    background: #e3493f;
    color: #fff;
    font: 400 12px/19px Inter, sans-serif;
}
.cal span{
    font: 300 36px/42px Inter, sans-serif;
    color: #222;
}
.tv{
    background: #14211f;
    border-radius: 13px;
    color: #fff;
    text-align: center;
    font: 500 32px/60px Inter, sans-serif;
}
.term{
    background: #0b0f10;
    border: 3px solid #3a4a4c;
    border-radius: 13px;
    color: #5fd03f;
    padding-left: 6px;
    font: 400 18px/36px "Liberation Mono", monospace;
}
.office{
    font: 500 20px Inter, sans-serif;
    fill: #fff;
}
.dock-sep{
    width: 2px;
    height: 70px;
    flex: none;
    margin: 4px 6px 0 5px;
    background: rgba(30,30,70,.55);
}
.dock-sep.sep2{
    margin: 4px 4px 0 10px;
}
.folder{
    width: 64px;
    height: 70px;
    flex: none;
    margin-top: -3px;
}
.folder svg, .trash svg{
    display: block;
    width: 100%;
    height: 100%;
}
.minis{
    display: flex;
    align-items: center;
    gap: 8.500px;
    margin-left: -8px;
}
.mini{
    position: relative;
    width: 72px;
    background: #fff;
    flex: none;
}
.mini svg{
    position: absolute;
    right: -2px;
    bottom: -14px;
}
.h36{ height: 36px; }
.h40{ height: 40px; }
.h56{ height: 56px; }
.h60{ height: 60px; }
.mini.a{ background: linear-gradient(#e6e2e2 12%, #234 12%, #234 18%, #f8f8f8 18%); }
.mini.b{ background: repeating-linear-gradient(#fff 0 5px, #dcdce4 5px 6px); }
.mini.c{ background: linear-gradient(#fff 30%, #8b9aa6 30%, #8b9aa6 50%, #eadfe0 50%); }
.mini.d{ background: linear-gradient(90deg, #7a3a8c 10%, #fff 10%, #fff 90%, #7a3a8c 90%); }
.mini.e{ background: linear-gradient(#fff 22%, #a9e4f4 22%, #a9e4f4 80%, #eee 80%); }
.mini.f{ background: #12305c; }
.trash{
    width: 54px;
    height: 70px;
    flex: none;
    margin-left: -1px;
}
```

FILE: chart.js
```js
// centres are read from 800px crops shown at 1.96x, so each list keeps its crop origin
const RADIUS = { blue: 33.7, orange: 43.9, red: 27.5, green: 12.3, teal: 15.8 };
const COLORS = { blue: "#4f79a8", orange: "#f48f2d", red: "#e2565c", green: "#5aa350", teal: "#79b6b0" };

const crops = [
    {
        at: [760, 380],
        blue: [1270,152, 1508,176, 945,250, 1164,235, 878,364, 788,462, 694,556, 513,564, 607,658, 447,678, 541,772, 392,799, 485,889, 361,925, 251,999, 396,1054, 286,1129, 160,1171, 333,1254, 207,1293, 94,1352, 305,1383, 188,1442, 298,1513],
        teal: [1082,188, 1039,235, 693,442, 638,474, 603,525],
        orange: [1380,258, 1062,349, 1246,364, 1446,415, 964,490, 1140,501, 1312,521, 838,607, 1042,643, 1215,662, 1407,666, 733,744, 917,760, 1109,799, 1309,807, 1486,819, 638,885, 811,897, 983,917, 1207,944, 1387,960, 545,1031, 717,1042, 889,1062, 1078,1062, 1281,1097, 470,1187, 642,1195, 811,1219, 983,1207, 1156,1215, 455,1360, 627,1367, 799,1387, 971,1375, 450,1528, 623,1540, 793,1560, 964,1548],
        red: [1505,1105, 1411,1156, 1333,1230, 1442,1262, 1258,1313, 1364,1333, 1109,1348, 1458,1391, 1199,1403, 1305,1426, 1105,1454, 1399,1481, 1199,1512, 1305,1528]
    },
    {
        at: [1500, 380],
        blue: [188,168, 321,184, 455,184, 283,309, 415,309, 548,325, 675,364, 799,403, 921,454, 1027,533, 1121,623, 1011,697, 1129,756, 1238,830, 1242,964, 1368,1011, 1442,1258, 1344,1344, 1383,1473],
        teal: [537,231, 1195,686, 1438,1356, 1458,1415],
        orange: [132,309, 227,451, 400,462, 572,478, 93,560, 305,603, 478,619, 733,541, 893,603, 172,713, 380,760, 638,682, 799,744, 243,870, 537,822, 697,885, 944,834, 1101,909, 403,932, 109,975, 564,995, 846,975, 270,1038, 1003,1050, 1167,1097, 430,1101, 713,1082, 869,1156, 1328,1160, 576,1191, 1046,1215, 732,1262, 1207,1277, 909,1325, 591,1364, 1069,1387, 775,1430, 1230,1450, 936,1493, 634,1528, 1097,1556],
        red: [160,1129, 289,1180, 85,1207, 192,1230, 380,1235, 285,1286, 466,1301, 85,1317, 192,1336, 372,1352, 278,1403, 462,1411, 120,1418, 203,1485, 368,1465, 493,1516, 293,1544, 400,1570],
        green: [48,1456, 25,1494, 72,1494, 123,1494, 2,1538, 48,1538, 99,1538, 147,1538, 25,1580, 72,1580, 123,1580, 99,1625]
    },
    {
        at: [760, 1160],
        blue: [180,46, 341,110, 223,168, 125,258, 223,349, 270,470, 341,584, 403,697, 470,815, 588,870, 470,944, 697,944, 584,1007, 819,999, 697,1073, 940,1046, 815,1132, 940,1179, 991,1301, 1121,1262, 1246,1289, 1380,1293, 1508,1269, 1571,1383],
        teal: [1481,1360, 1422,1379],
        orange: [493,168, 663,180, 834,200, 1007,188, 348,262, 560,330, 733,337, 933,341, 1097,388, 415,420, 634,482, 827,482, 995,525, 1234,490, 1407,474, 489,572, 733,623, 897,670, 1132,627, 1301,650, 1473,630, 587,717, 740,795, 1039,772, 1207,791, 1380,803, 897,869, 1050,944, 1223,964, 1395,975, 1077,1113, 1250,1136, 1419,1144],
        red: [1105,34, 1231,86, 1395,62, 1136,137, 1321,144, 1477,133, 1227,195, 1406,211, 1132,250, 1513,234, 1312,262, 1219,317, 1406,321, 1513,340, 1309,372, 1545,442]
    },
    {
        at: [1500, 1160],
        blue: [1407,74, 1411,203, 1403,337, 1250,415, 1372,462, 1242,545, 1364,595, 1184,662, 1144,787, 1015,854, 1129,921, 913,940, 1027,1007, 826,1038, 940,1105, 725,1120, 611,1191, 509,1269, 407,1356, 274,1375, 191,1273],
        teal: [1277,634, 1273,697, 1238,744, 850,1132, 803,1175, 756,1211, 697,1234, 203,1438],
        orange: [791,74, 1258,90, 627,172, 952,137, 1113,200, 785,246, 1270,262, 443,333, 615,345, 944,309, 1105,372, 772,419, 317,450, 521,490, 933,482, 1089,545, 674,560, 180,556, 392,607, 834,623, 548,678, 1018,701, 255,709, 709,741, 874,792, 102,787, 411,783, 576,850, 270,882, 747,909, 117,956, 438,952, 615,1019, 298,1054, 140,1129, 477,1120, 332,1218],
        red: [200,70, 493,95, 140,160, 293,125, 400,148, 490,203, 235,215, 341,240, 157,290, 266,317, 188,391]
    }
];

const svg = document.getElementById("bubbles");
for (const crop of crops) {
    for (const name of Object.keys(RADIUS)) {
        const list = crop[name] || [];
        for (let i = 0; i < list.length; i += 2) {
            const c = document.createElementNS("http://www.w3.org/2000/svg", "circle");
            c.setAttribute("cx", crop.at[0] + list[i] / 1.96);
            c.setAttribute("cy", crop.at[1] + list[i + 1] / 1.96);
            c.setAttribute("r", RADIUS[name]);
            c.setAttribute("fill", COLORS[name]);
            svg.appendChild(c);
        }
    }
}
```
